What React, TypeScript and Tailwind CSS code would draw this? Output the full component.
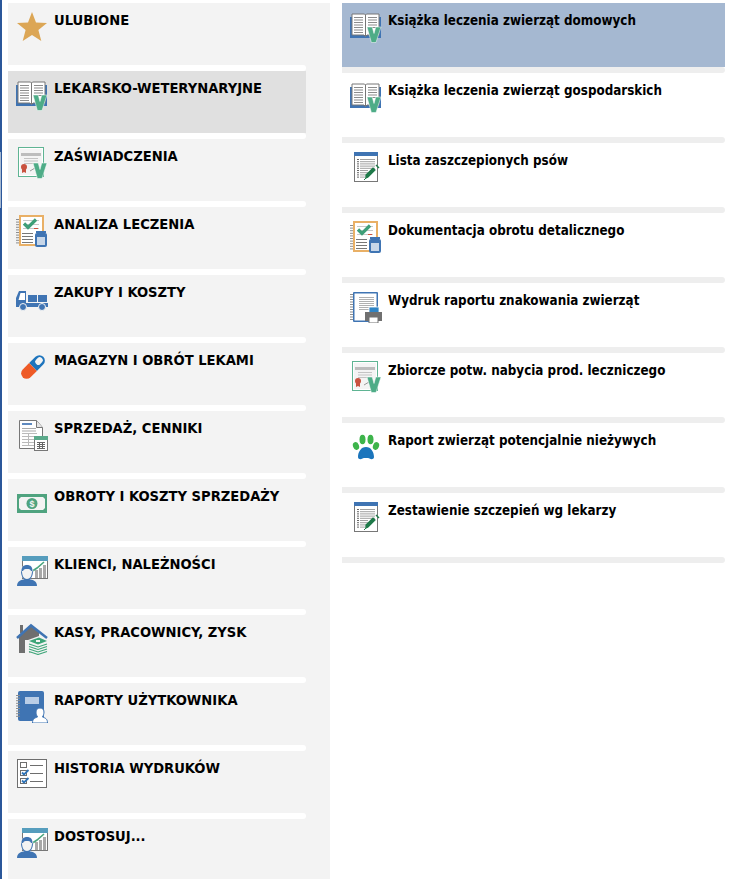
import type { ReactNode } from 'react';

function Icon({ children }: { children: ReactNode }) {
  return (
    <svg width="32" height="32" viewBox="0 0 32 32" className="shrink-0">
      {children}
    </svg>
  );
}

const Lines = ({ x, y, w, n, gap = 2.5, color = '#8c8c8c' }: { x: number; y: number; w: number; n: number; gap?: number; color?: string }) => (
  <>
    {Array.from({ length: n }).map((_, i) => (
      <rect key={i} x={x} y={y + i * gap} width={w} height="1" fill={color} />
    ))}
  </>
);

const VMark = ({ x = 17, y = 16 }: { x?: number; y?: number }) => (
  <path
    d={`M${x} ${y}h5.200l1.800 6.500 1.800-6.500H${x + 14}l-5 15.500h-4.600z`}
    fill="#4eac87"
    stroke="#fff"
    strokeWidth="0.500"
  />
);

const BookIcon = () => (
  <Icon>
    <rect x="0" y="6" width="31" height="21" fill="#3f74b3" />
    <path d="M2 3h12.500l1 1 1-1H29v21H17l-1.500 1.500L14 24H2z" fill="#fff" stroke="#777" strokeWidth="1" />
    <rect x="15" y="4" width="1" height="21" fill="#777" />
    <Lines x={4} y={6} w={9} n={7} />
    <Lines x={18} y={6} w={9} n={5} />
    <VMark />
  </Icon>
);

const StarIcon = () => (
  <Icon>
    <path d="M16 1l4 10.500 11 .6-8.600 7 2.900 10.900L16 24l-9.300 6 2.900-10.900L1 12.100l11-.6z" fill="#dca655" />
  </Icon>
);

const CertIcon = () => (
  <Icon>
    <rect x="2.500" y="0.500" width="25" height="29" fill="#fff" stroke="#5fb493" strokeWidth="1" />
    <rect x="4" y="2" width="22" height="26" fill="#f4f4f4" />
    <rect x="5" y="6" width="20" height="3" fill="#bdbdbd" />
    <Lines x={8} y={11} w={14} n={3} color="#c4c4c4" />
    <circle cx="8" cy="20" r="3" fill="#c9523f" />
    <path d="M6 22h4v4l-2-1-2 1z" fill="#c9523f" />
    <path d="M14 24l5-3" stroke="#999" strokeWidth="1" />
    <VMark x={17} y={16} />
  </Icon>
);

const AnalysisIcon = () => (
  <Icon>
    <rect x="3" y="0" width="25" height="31" fill="#e9b066" />
    <rect x="5" y="2" width="21" height="27" fill="#fff" />
    <Lines x={0} y={4} w={3} n={10} gap={2.600} color="#8d8d8d" />
    <Lines x={7} y={5} w={16} n={3} gap={4} color="#c8c8c8" />
    <path d="M8 8.500l4 4 8-8" fill="none" stroke="#3f9f78" strokeWidth="3.200" />
    <rect x="18" y="13" width="4" height="1" fill="#d0503c" />
    <Lines x={6} y={18} w={11} n={4} gap={3} color="#777" />
    <rect x="19" y="18" width="12" height="14" rx="2" fill="#3f74b3" />
    <rect x="21" y="22" width="8" height="8" fill="#c7d6e8" />
    <rect x="20" y="16" width="10" height="2" fill="#3f74b3" />
  </Icon>
);

const TruckIcon = () => (
  <Icon>
    <path d="M0 24v-9l3-7h7v16z" fill="#3f74b3" />
    <path d="M2.500 17l2-7H9v7z" fill="#fff" />
    <rect x="12" y="12" width="9" height="7" fill="#3f74b3" />
    <rect x="22" y="12" width="9" height="7" fill="#3f74b3" />
    <rect x="0" y="20" width="32" height="4" fill="#3f74b3" />
    <circle cx="7" cy="24" r="3.500" fill="#3f74b3" stroke="#f3f3f3" strokeWidth="1" />
    <circle cx="26" cy="24" r="3.500" fill="#3f74b3" stroke="#f3f3f3" strokeWidth="1" />
  </Icon>
);

const PillIcon = () => (
  <Icon>
    <g transform="rotate(45 17 16)">
      <path d="M11.500 16V7a5.500 5.500 0 0 1 11 0v9z" fill="#1d74bd" />
      <rect x="14" y="3.500" width="6" height="8" rx="2.500" fill="#f3f3f3" />
      <path d="M11.500 16h11v9a5.500 5.500 0 0 1-11 0z" fill="#ee5a26" />
    </g>
  </Icon>
);

const SheetIcon = () => (
  <Icon>
    <path d="M3.500 1.500h17l6 7v21h-23z" fill="#fff" stroke="#777" strokeWidth="1" />
    <path d="M20.500 1.500v7h6" fill="#e5e5e5" stroke="#777" strokeWidth="1" />
    <rect x="6" y="4" width="10" height="2" fill="#5f8ac0" />
    <Lines x={6} y={9} w={14} n={2} color="#aaa" />
    <Lines x={6} y={14} w={15} n={5} gap={3} color="#bbb" />
    <rect x="12" y="14" width="1" height="12" fill="#bbb" />
    <rect x="18.500" y="17.500" width="13" height="14" fill="#fff" stroke="#777" strokeWidth="1" />
    <rect x="18" y="17" width="14" height="4" fill="#5aa98a" />
    <path d="M21 23h8v1h-8zM21 25h8v1h-8zM21 27h8v1h-8zM21 29h8v1h-8zM23 23h1v7h-1zM26 23h1v7h-1z" fill="#666" />
  </Icon>
);

const MoneyIcon = () => (
  <Icon>
    <rect x="1" y="7" width="30" height="19" fill="#4fa37f" />
    <path d="M5 10h22l2 2v9l-2 2H5l-2-2v-9z" fill="#f3f3f3" />
    <circle cx="16" cy="16.500" r="5.500" fill="#4fa37f" />
    <text x="16" y="20" textAnchor="middle" fontSize="9" fontWeight="700" fill="#f3f3f3" fontFamily="Liberation Sans, sans-serif">$</text>
  </Icon>
);

const ClientIcon = () => (
  <Icon>
    <rect x="6.500" y="1.500" width="25" height="22" fill="#fff" stroke="#777" strokeWidth="1" />
    <rect x="6" y="1" width="26" height="5" fill="#569dbd" />
    <rect x="19" y="15" width="3" height="8" fill="#a9a9a9" />
    <rect x="23" y="13" width="3" height="10" fill="#a9a9a9" />
    <rect x="27" y="10" width="3" height="13" fill="#a9a9a9" />
    <path d="M15 17l6-4 7-6" fill="none" stroke="#4aa57e" strokeWidth="1.600" />
    <path d="M1 31c0-5 4-6 8-7h4c4 1 8 2 8 7z" fill="#3f74b3" />
    <ellipse cx="11" cy="17" rx="6.500" ry="7.500" fill="#f3f3f3" />
    <path d="M5.500 16c0-4 2-6 5.500-6s5.500 2 5.500 6l-1.500 0c-1-2-2-2-4-2s-3 0-4 2z" fill="#3f74b3" />
    <path d="M6 16c0 5 2 8 5 8s5-3 5-8l1 .500c0 5-3 9-6 9s-6-4-6-9z" fill="#3f74b3" />
  </Icon>
);

const HouseIcon = () => (
  <Icon>
    <path d="M3 12l12-10 8 7v21H3z" fill="#6f6f6f" />
    <rect x="4" y="2" width="3" height="8" fill="#6f6f6f" />
    <rect x="9" y="17" width="4" height="13" fill="#f3f3f3" />
    <path d="M1 15L15 2.500 31 15" fill="none" stroke="#3f74b3" strokeWidth="2.500" />
    <path d="M12 17l11-4 9 4v12l-10 3-10-3z" fill="#f3f3f3" />
    <path d="M13 18l10-3.500 8 3.500-9 3.500z" fill="#3da578" />
    <rect x="20" y="17" width="4" height="2" fill="#f3f3f3" />
    <path d="M13 21l9 3 9-3M13 23.500l9 3 9-3M13 26l9 3 9-3M13 28.500l9 3 9-3" fill="none" stroke="#3da578" strokeWidth="1.100" />
  </Icon>
);

const NotebookIcon = () => (
  <Icon>
    <rect x="2" y="0" width="26" height="30" rx="2" fill="#3f74b3" />
    <Lines x={0} y={4} w={4} n={9} gap={2.600} color="#8d8d8d" />
    <rect x="9" y="6" width="14" height="7" fill="#b9cde6" />
    <path d="M16.500 32c0-4 2-5 5-6-1-2-1.500-3-1.500-5 0-3 2-4 4-4s4 1 4 4c0 2-.5 3-1.500 5 3 1 5 2 5 6z" fill="#fff" stroke="#3f74b3" strokeWidth="1" />
  </Icon>
);

const ChecklistIcon = () => (
  <Icon>
    <rect x="1.500" y="0.500" width="29" height="28" fill="#fff" stroke="#6e6e6e" strokeWidth="1" />
    {[4, 12, 20].map(y => (
      <g key={y}>
        <rect x="4.500" y={y - 0.500} width="6" height="5" fill="#fff" stroke="#6e6e6e" strokeWidth="1" />
        <rect x="14" y={y + 2} width="13" height="1" fill="#6e6e6e" />
      </g>
    ))}
    <path d="M6 13.500l2 2 4.500-4.500M6 21.500l2 2 4.500-4.500" fill="none" stroke="#2f74b8" strokeWidth="1.800" />
  </Icon>
);

const ListIcon = () => (
  <Icon>
    <rect x="4.500" y="1.500" width="23" height="29" fill="#fff" stroke="#777" strokeWidth="1" />
    <rect x="4" y="1" width="24" height="4" fill="#3f74b3" />
    <Lines x={7} y={8} w={2} n={9} gap={2.200} color="#666" />
    <Lines x={10} y={8} w={15} n={5} gap={2.200} color="#a0a0a0" />
    <Lines x={10} y={19} w={8} n={4} gap={2.200} color="#a0a0a0" />
    <path d="M16 27l2-1 7-7-2-2-7 7z" fill="#1f7a4a" stroke="#1f7a4a" strokeWidth="1.200" />
    <path d="M26 14l3 3" stroke="#1f7a4a" strokeWidth="1.400" />
    <path d="M14 29l3-3" stroke="#1f7a4a" strokeWidth="1" />
  </Icon>
);

const PrinterIcon = () => (
  <Icon>
    <rect x="3" y="1" width="25" height="30" rx="1" fill="#3f74b3" />
    <rect x="4.500" y="2.500" width="22" height="27" fill="#fff" />
    <Lines x={0} y={3} w={3} n={11} gap={2.500} color="#8d8d8d" />
    <Lines x={9} y={6} w={15} n={7} gap={2} color="#b0b0b0" />
    <rect x="19" y="16" width="10" height="6" fill="#2f84c5" stroke="#fff" strokeWidth="0.800" />
    <rect x="15" y="21" width="17" height="9" fill="#707070" />
    <rect x="19" y="26" width="9" height="6" fill="#fff" stroke="#707070" strokeWidth="1" />
  </Icon>
);

const PawIcon = () => (
  <Icon>
    <path d="M8 26c0-5 3-10 8-10s8 5 8 10c0 2.500-3 2.500-4 1.800-1.500-.8-2.500-.8-4-.8s-2.500 0-4 .8c-1 .7-4 .7-4-1.800z" fill="#1b75bc" />
    <ellipse cx="6" cy="15" rx="3" ry="4" fill="#3db44b" transform="rotate(-20 6 15)" />
    <ellipse cx="12.500" cy="8.500" rx="3" ry="4.800" fill="#3db44b" />
    <ellipse cx="20.500" cy="8.500" rx="3" ry="4.800" fill="#3db44b" />
    <ellipse cx="26" cy="15" rx="3" ry="4" fill="#3db44b" transform="rotate(20 26 15)" />
  </Icon>
);

const leftItems: { label: string; icon: ReactNode; active?: boolean }[] = [
  { label: 'ULUBIONE', icon: <StarIcon /> },
  { label: 'LEKARSKO-WETERYNARYJNE', icon: <BookIcon />, active: true },
  { label: 'ZAŚWIADCZENIA', icon: <CertIcon /> },
  { label: 'ANALIZA LECZENIA', icon: <AnalysisIcon /> },
  { label: 'ZAKUPY I KOSZTY', icon: <TruckIcon /> },
  { label: 'MAGAZYN I OBRÓT LEKAMI', icon: <PillIcon /> },
  { label: 'SPRZEDAŻ, CENNIKI', icon: <SheetIcon /> },
  { label: 'OBROTY I KOSZTY SPRZEDAŻY', icon: <MoneyIcon /> },
  { label: 'KLIENCI, NALEŻNOŚCI', icon: <ClientIcon /> },
  { label: 'KASY, PRACOWNICY, ZYSK', icon: <HouseIcon /> },
  { label: 'RAPORTY UŻYTKOWNIKA', icon: <NotebookIcon /> },
  { label: 'HISTORIA WYDRUKÓW', icon: <ChecklistIcon /> },
  { label: 'DOSTOSUJ...', icon: <ClientIcon /> },
];

const rightItems: { label: string; icon: ReactNode; active?: boolean }[] = [
  { label: 'Książka leczenia zwierząt domowych', icon: <BookIcon />, active: true },
  { label: 'Książka leczenia zwierząt gospodarskich', icon: <BookIcon /> },
  { label: 'Lista zaszczepionych psów', icon: <ListIcon /> },
  { label: 'Dokumentacja obrotu detalicznego', icon: <AnalysisIcon /> },
  { label: 'Wydruk raportu znakowania zwierząt', icon: <PrinterIcon /> },
  { label: 'Zbiorcze potw. nabycia prod. leczniczego', icon: <CertIcon /> },
  { label: 'Raport zwierząt potencjalnie nieżywych', icon: <PawIcon /> },
  { label: 'Zestawienie szczepień wg lekarzy', icon: <ListIcon /> },
];

export default function App() {
  return (
    <div className="flex h-[879px] w-[739px] overflow-hidden bg-white font-['DejaVu_Sans_Condensed','DejaVu_Sans',sans-serif] font-bold leading-4 text-black">
      <div className="flex w-[2px] shrink-0 flex-col bg-[#2b579a]">
        <div className="h-[152px] shrink-0" />
        <div className="h-[56px] w-px shrink-0 bg-[#a5b8d1]" />
      </div>

      <div className="ml-[6px] mt-[3px] w-[322px] shrink-0 bg-[#f3f3f3] text-[14.6px]">
        {leftItems.map(item => (
          <div key={item.label} className="w-[298px]">
            <div className={`flex h-[62px] items-start gap-[6px] pl-2 pt-2 ${item.active ? 'bg-[#e0e0e0]' : ''}`}>
              {item.icon}
              <span className="mt-px whitespace-nowrap">{item.label}</span>
            </div>
            <div className="h-[6px] rounded-r-[3px] bg-white" />
          </div>
        ))}
      </div>

      <div className="ml-3 mt-[3px] w-[383px] shrink-0 text-[13.3px]">
        {rightItems.map(item => (
          <div key={item.label}>
            <div className={`flex h-[64px] items-start gap-[6px] pl-2 pt-2 ${item.active ? 'bg-[#a5b8d1]' : ''}`}>
              {item.icon}
              <span className="mt-[2px] whitespace-nowrap">{item.label}</span>
            </div>
            <div className="h-[6px] rounded-r-[3px] bg-[#eeeeee]" />
          </div>
        ))}
      </div>
    </div>
  );
}
